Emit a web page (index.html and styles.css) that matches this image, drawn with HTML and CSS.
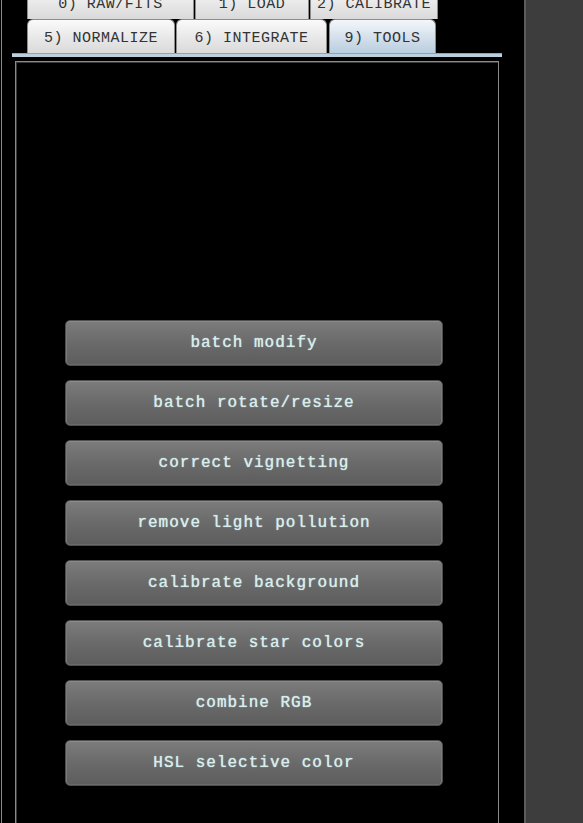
FILE: index.html
```html
<!DOCTYPE html>
<html lang="en">
<head>
    <meta charset="UTF-8">
    <meta name="viewport" content="width=device-width, initial-scale=1.0">
    <title>Tools</title>
    <link rel="stylesheet" href="styles.css">
</head>
<body>

    <div class="app">
        <div class="main">
            <div class="tabs">
                <div class="tab-row">
                    <div class="tab w167">0) RAW/FITS</div>
                    <div class="tab w114">1) LOAD</div>
                    <div class="tab w128">2) CALIBRATE</div>
                </div>
                <div class="tab-row">
                    <div class="tab w148">5) NORMALIZE</div>
                    <div class="tab w151">6) INTEGRATE</div>
                    <div class="tab w106 active">9) TOOLS</div>
                </div>
            </div>
            <div class="tab-bar"></div>

            <div class="content">
                <div class="tool-list">
                    <button>batch modify</button>
                    <button>batch rotate/resize</button>
                    <button>correct vignetting</button>
                    <button>remove light pollution</button>
                    <button>calibrate background</button>
                    <button>calibrate star colors</button>
                    <button>combine RGB</button>
                    <button>HSL selective color</button>
                </div>
            </div>
        </div>
        <div class="side"></div>
    </div>

</body>
</html>
```

FILE: styles.css
```css
/* layout */
body {
    margin: 0;
    background-color: #000;
    font-family: "Liberation Mono", "Courier New", monospace;
    overflow: hidden;
}

.app {
    display: flex;
    height: 100vh;
}

.main {
    width: 522px;
    margin-left: 1px;
    border-left: 1px solid #8a8a8a;
    flex: none;
}

.side {
    flex: 1;
    background-color: #3d3d3d;
    border-left: 2px solid #5c5c5c;
}

/* tabs - the top row is scrolled partly out of view */
.tabs {
    margin-top: -15px;
    padding-left: 25px;
}

.tab-row {
    display: flex;
    gap: 1px;
}

.tab {
    height: 34px;
    box-sizing: border-box;
    padding-top: 3px;
    display: flex;
    align-items: center;
    justify-content: center;
    font-size: 15px;
    letter-spacing: 0.5px;
    color: #333;
    background: linear-gradient(#fafafa, #e6e6e6 60%, #dadada);
    border: 1px solid #8c8c8c;
    border-bottom: none;
    border-radius: 6px 6px 0 0;
}

.tab.active {
    background: linear-gradient(#f4f7fa, #d6e1ec 50%, #b9cde0);
}

.w167 { width: 167px; }
.w114 { width: 114px; }
.w128 { width: 128px; }
.w148 { width: 148px; }
.w151 { width: 151px; }
.w106 { width: 107px; margin-left: 1px; }

.tab-bar {
    margin-left: 10px;
    width: 490px;
    height: 3px;
    background-color: #bccfe1;
    border-top: 1px solid #8fa3b6;
}

/* content panel */
.content {
    margin: 4px 0 0 13px;
    width: 482px;
    height: 800px;
    border: 1px solid #8a8a8a;
    border-bottom: none;
    box-shadow: inset 1px 1px 0 #3a3a3a;
}

.tool-list {
    display: flex;
    flex-direction: column;
    gap: 14px;
    padding: 258px 0 0 49px;
}

.tool-list button {
    width: 378px;
    height: 46px;
    font-family: "Liberation Mono", "Courier New", monospace;
    font-size: 16px;
    letter-spacing: 1px;
    color: #d6eeec;
    background: linear-gradient(#7c7c7c, #6a6a6a 50%, #5d5d5d);
    border: 1px solid #4e4e4e;
    border-radius: 5px;
    box-shadow: inset 0 1px 0 #8c8c8c, inset 1px 0 0 #7a7a7a, inset -1px 0 0 #7a7a7a, inset 0 -1px 0 #6a6a6a;
    text-shadow: 0 0 1px #d6eeec;
}
```
